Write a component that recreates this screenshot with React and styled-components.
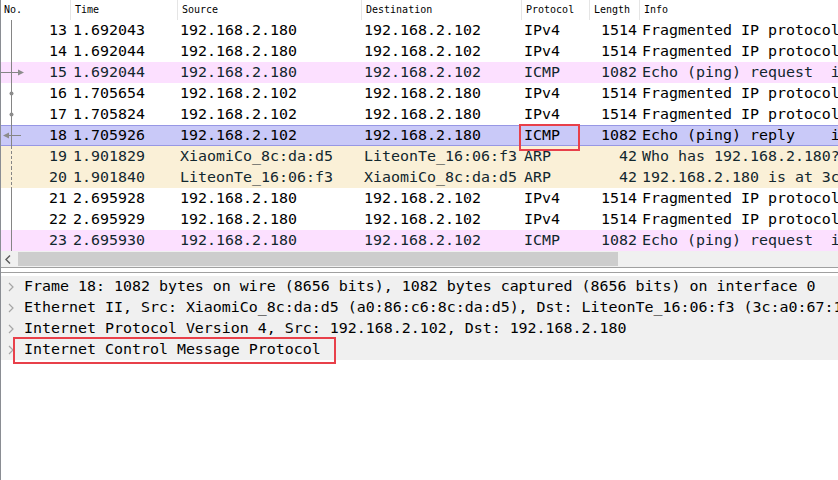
import React from "react";
import styled, { createGlobalStyle, css } from "styled-components";

const GlobalStyle = createGlobalStyle`
  html, body {
    margin: 0;
    padding: 0;
    background: #ffffff;
  }
  * {
    box-sizing: border-box;
  }
`;

const MONO = `"DejaVu Sans Mono", "Liberation Mono", monospace`;
const COLS = "69px 107px 184px 160px 68px 50px 1fr";

const rowColors = {
  plain: { bg: "#ffffff", fg: "#000000" },
  icmp: { bg: "#fce0ff", fg: "#12272e" },
  arp: { bg: "#faf0d7", fg: "#12272e" },
  selected: { bg: "#c9c9f8", fg: "#000000" },
};

const packets = [
  { no: 13, time: "1.692043", src: "192.168.2.180", dst: "192.168.2.102", proto: "IPv4", len: 1514, info: "Fragmented IP protocol (proto=ICMP 1, off=0, ID=2f1a) [Reassembled in #15]", kind: "plain", rel: "line" },
  { no: 14, time: "1.692044", src: "192.168.2.180", dst: "192.168.2.102", proto: "IPv4", len: 1514, info: "Fragmented IP protocol (proto=ICMP 1, off=1480, ID=2f1a) [Reassembled in #15]", kind: "plain", rel: "line" },
  { no: 15, time: "1.692044", src: "192.168.2.180", dst: "192.168.2.102", proto: "ICMP", len: 1082, info: "Echo (ping) request  id=0x0001, seq=25/6400, ttl=64 (reply in 18)", kind: "icmp", rel: "request" },
  { no: 16, time: "1.705654", src: "192.168.2.102", dst: "192.168.2.180", proto: "IPv4", len: 1514, info: "Fragmented IP protocol (proto=ICMP 1, off=0, ID=8c04) [Reassembled in #18]", kind: "plain", rel: "dot" },
  { no: 17, time: "1.705824", src: "192.168.2.102", dst: "192.168.2.180", proto: "IPv4", len: 1514, info: "Fragmented IP protocol (proto=ICMP 1, off=1480, ID=8c04) [Reassembled in #18]", kind: "plain", rel: "dot" },
  { no: 18, time: "1.705926", src: "192.168.2.102", dst: "192.168.2.180", proto: "ICMP", len: 1082, info: "Echo (ping) reply    id=0x0001, seq=25/6400, ttl=64 (request in 15)", kind: "selected", rel: "reply", marked: true },
  { no: 19, time: "1.901829", src: "XiaomiCo_8c:da:d5", dst: "LiteonTe_16:06:f3", proto: "ARP", len: 42, info: "Who has 192.168.2.180? Tell 192.168.2.102", kind: "arp", rel: "dashed" },
  { no: 20, time: "1.901840", src: "LiteonTe_16:06:f3", dst: "XiaomiCo_8c:da:d5", proto: "ARP", len: 42, info: "192.168.2.180 is at 3c:a0:67:16:06:f3", kind: "arp", rel: "dashed" },
  { no: 21, time: "2.695928", src: "192.168.2.180", dst: "192.168.2.102", proto: "IPv4", len: 1514, info: "Fragmented IP protocol (proto=ICMP 1, off=0, ID=2f1b) [Reassembled in #23]", kind: "plain", rel: "line" },
  { no: 22, time: "2.695929", src: "192.168.2.180", dst: "192.168.2.102", proto: "IPv4", len: 1514, info: "Fragmented IP protocol (proto=ICMP 1, off=1480, ID=2f1b) [Reassembled in #23]", kind: "plain", rel: "line" },
  { no: 23, time: "2.695930", src: "192.168.2.180", dst: "192.168.2.102", proto: "ICMP", len: 1082, info: "Echo (ping) request  id=0x0001, seq=26/6656, ttl=64 (reply in 26)", kind: "icmp", rel: "line" },
];

const details = [
  { text: "Frame 18: 1082 bytes on wire (8656 bits), 1082 bytes captured (8656 bits) on interface 0" },
  { text: "Ethernet II, Src: XiaomiCo_8c:da:d5 (a0:86:c6:8c:da:d5), Dst: LiteonTe_16:06:f3 (3c:a0:67:16:06:f3)" },
  { text: "Internet Protocol Version 4, Src: 192.168.2.102, Dst: 192.168.2.180" },
  { text: "Internet Control Message Protocol", marked: true },
];

const headers = ["No.", "Time", "Source", "Destination", "Protocol", "Length", "Info"];

const RelationMark = ({ type }) => {
  const stroke = "#858585";
  return (
    <svg width="24" height="21" viewBox="0 0 24 21">
      {type === "dashed" ? (
        <line x1="10.5" y1="0" x2="10.5" y2="21" stroke={stroke} strokeWidth="1" strokeDasharray="3 2" />
      ) : (
        <line x1="10.5" y1="0" x2="10.5" y2="21" stroke={stroke} strokeWidth="1" />
      )}
      {type === "dot" && <circle cx="10.5" cy="10.5" r="2" fill="#8c8c8c" />}
      {type === "request" && (
        <>
          <line x1="0" y1="10.5" x2="18" y2="10.5" stroke={stroke} strokeWidth="1" />
          <polygon points="17,7.5 23,10.5 17,13.5" fill="#8c8c8c" />
        </>
      )}
      {type === "reply" && (
        <>
          <line x1="7" y1="10.5" x2="20" y2="10.5" stroke={stroke} strokeWidth="1" />
          <polygon points="8,7.5 2,10.5 8,13.5" fill="#8c8c8c" />
        </>
      )}
    </svg>
  );
};

const App = () => {
  return (
    <>
      <GlobalStyle />
      <Window>
        <PacketList>
          <HeaderRow>
            {headers.map((h, i) => (
              <HeaderCell key={h} $first={i === 0}>
                {h}
              </HeaderCell>
            ))}
          </HeaderRow>
          {packets.map((p) => (
            <PacketRow key={p.no} $kind={p.kind}>
              <NoCell>
                <RelationMark type={p.rel} />
                <span>{p.no}</span>
              </NoCell>
              <Cell>{p.time}</Cell>
              <Cell>{p.src}</Cell>
              <Cell>{p.dst}</Cell>
              <Cell $marked={p.marked}>{p.proto}</Cell>
              <Cell $right>{p.len}</Cell>
              <Cell>{p.info}</Cell>
            </PacketRow>
          ))}
        </PacketList>
        <ScrollBar>
          <ScrollButton>
            <svg width="6" height="9" viewBox="0 0 6 9">
              <polyline points="5,0.5 1,4.5 5,8.5" fill="none" stroke="#5a5a5a" strokeWidth="1.4" />
            </svg>
          </ScrollButton>
          <Thumb />
          <Track />
        </ScrollBar>
        <Splitter />
        <DetailsPane>
          {details.map((d) => (
            <DetailRow key={d.text}>
              <Chevron width="6" height="10" viewBox="0 0 6 10">
                <polyline points="1,1 5,5 1,9" fill="none" stroke="#a6a6a6" strokeWidth="1.2" />
              </Chevron>
              <DetailLabel $marked={d.marked}>{d.text}</DetailLabel>
            </DetailRow>
          ))}
        </DetailsPane>
      </Window>
    </>
  );
};

export default App;

const Window = styled.div`
  width: 838px;
  height: 480px;
  overflow: hidden;
  background: #ffffff;
  border-left: 1px solid #8a8d93;
  display: flex;
  flex-direction: column;
`;

const PacketList = styled.div`
  display: flex;
  flex-direction: column;
`;

const HeaderRow = styled.div`
  display: grid;
  grid-template-columns: ${COLS};
  height: 20px;
  background: #ffffff;
`;

const HeaderCell = styled.div`
  font-family: "DejaVu Sans Mono", "Liberation Mono", monospace;
  font-size: 10px;
  line-height: 20px;
  color: #000000;
  padding-left: ${(p) => (p.$first ? "3px" : "4px")};
  border-left: ${(p) => (p.$first ? "none" : "1px solid #e5e5e5")};
  white-space: nowrap;
  overflow: hidden;
`;

const PacketRow = styled.div`
  display: grid;
  grid-template-columns: ${COLS};
  height: 21px;
  background: ${(p) => rowColors[p.$kind].bg};
  color: ${(p) => rowColors[p.$kind].fg};
  font-family: ${MONO};
  font-size: 14.95px;
  line-height: 21px;
  white-space: pre;
  ${(p) =>
    p.$kind === "selected" &&
    css`
      box-shadow: inset 0 1px 0 #9797e4, inset 0 -1px 0 #9797e4;
    `}
`;

const Cell = styled.div`
  position: relative;
  padding: ${(p) => (p.$right ? "0 2px 0 0" : "0 0 0 3px")};
  text-align: ${(p) => (p.$right ? "right" : "left")};

  ${(p) =>
    p.$marked &&
    css`
      &::after {
        content: "";
        position: absolute;
        left: -2px;
        top: -1px;
        width: 57px;
        height: 23px;
        border: 2px solid #e8404a;
      }
    `}
`;

const NoCell = styled.div`
  display: flex;
  justify-content: space-between;
  padding-right: 3px;
`;

const ScrollBar = styled.div`
  display: flex;
  height: 17px;
  background: #f0f0f0;
  border-bottom: 1px solid #a0a0a0;
`;

const ScrollButton = styled.div`
  width: 17px;
  display: flex;
  align-items: center;
  justify-content: center;
  padding-right: 3px;
`;

const Thumb = styled.div`
  width: 600px;
  margin: 1px 0;
  background: #cdcdcd;
`;

const Track = styled.div`
  flex: 1;
`;

const Splitter = styled.div`
  height: 5px;
  background: #ffffff;
  border-bottom: 1px solid #a0a0a0;
`;

const DetailsPane = styled.div`
  padding-top: 3px;
  display: flex;
  flex-direction: column;
`;

const DetailRow = styled.div`
  display: flex;
  align-items: center;
  height: 21px;
  padding-left: 7px;
  background: #f0f0f0;
  font-family: ${MONO};
  font-size: 14.95px;
  color: #000000;
  white-space: pre;
`;

const Chevron = styled.svg`
  flex-shrink: 0;
`;

const DetailLabel = styled.span`
  position: relative;
  margin-left: 10px;
  line-height: 21px;

  ${(p) =>
    p.$marked &&
    css`
      &::after {
        content: "";
        position: absolute;
        left: -11px;
        top: -2px;
        width: 319px;
        height: 23px;
        border: 2px solid #e8404a;
      }
    `}
`;
